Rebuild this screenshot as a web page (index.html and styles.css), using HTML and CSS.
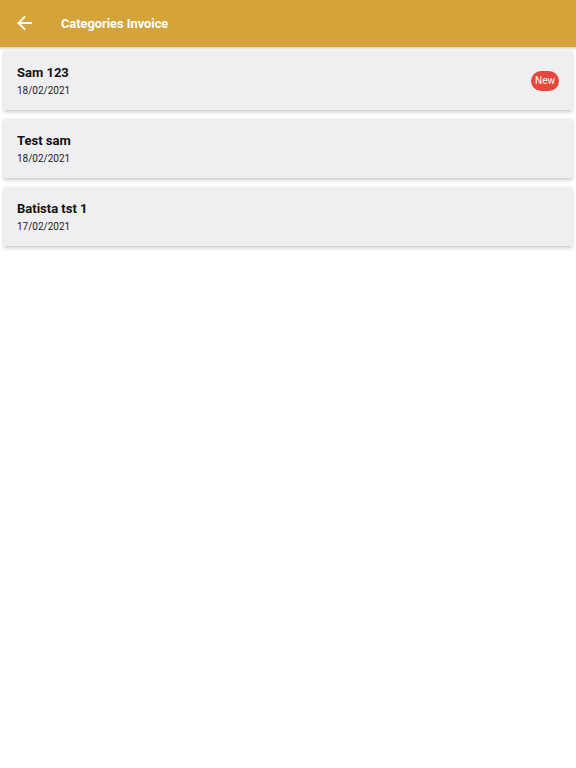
FILE: index.html
```html
<!DOCTYPE html>
<html>
<head>
<meta charset="utf-8">
<link rel="stylesheet" href="styles.css">
</head>
<body>
<header class="appbar">
  <svg class="back" width="16" height="16" viewBox="0 0 16 16"><path d="M15 8H2.5M8.5 2L2.5 8l6 6" fill="none" stroke="#fff" stroke-width="1.8" stroke-linecap="square"/></svg>
  <span class="title">Categories Invoice</span>
</header>
<main class="list">
  <div class="card">
    <div class="info">
      <div class="name">Sam 123</div>
      <div class="date">18/02/2021</div>
    </div>
    <span class="badge">New</span>
  </div>
  <div class="card">
    <div class="info">
      <div class="name">Test sam</div>
      <div class="date">18/02/2021</div>
    </div>
  </div>
  <div class="card">
    <div class="info">
      <div class="name">Batista tst 1</div>
      <div class="date">17/02/2021</div>
    </div>
  </div>
</main>
</body>
</html>
```
FILE: styles.css
```css
html, body {
  margin: 0;
  padding: 0;
  background: #fff;
  font-family: Roboto, "Noto Sans", sans-serif;
}
.appbar {
  height: 47px;
  background: #d4a43b;
  display: flex;
  align-items: center;
  padding-left: 16px;
  box-shadow: 0 1px 3px rgba(0,0,0,0.25);
  position: relative;
  z-index: 1;
}
.back {
  display: block;
  margin-top: -1px;
}
.title {
  color: #fff;
  font-weight: 700;
  font-size: 12.8px;
  margin-left: 29px;
  margin-top: -1px;
}
.list {
  display: flex;
  flex-direction: column;
  gap: 9px;
  padding: 4px 4px 20px 4px;
}
.card {
  height: 59px;
  background: #efeff1;
  box-shadow: 0 2px 4px rgba(0,0,0,0.2), 0 0 2px rgba(0,0,0,0.06);
  display: flex;
  align-items: center;
  justify-content: space-between;
  padding: 0 13px;
  box-sizing: border-box;
}
.info {
  display: flex;
  flex-direction: column;
  gap: 3px;
}
.name {
  font-size: 13px;
  font-weight: 700;
  color: #111;
  line-height: 16px;
}
.date {
  font-size: 10px;
  color: #222;
  line-height: 13px;
}
.badge {
  background: #e8453c;
  color: #fff;
  font-size: 10px;
  height: 20px;
  line-height: 20px;
  padding: 0 4px;
  min-width: 20px;
  text-align: center;
  border-radius: 10px;
}
```
